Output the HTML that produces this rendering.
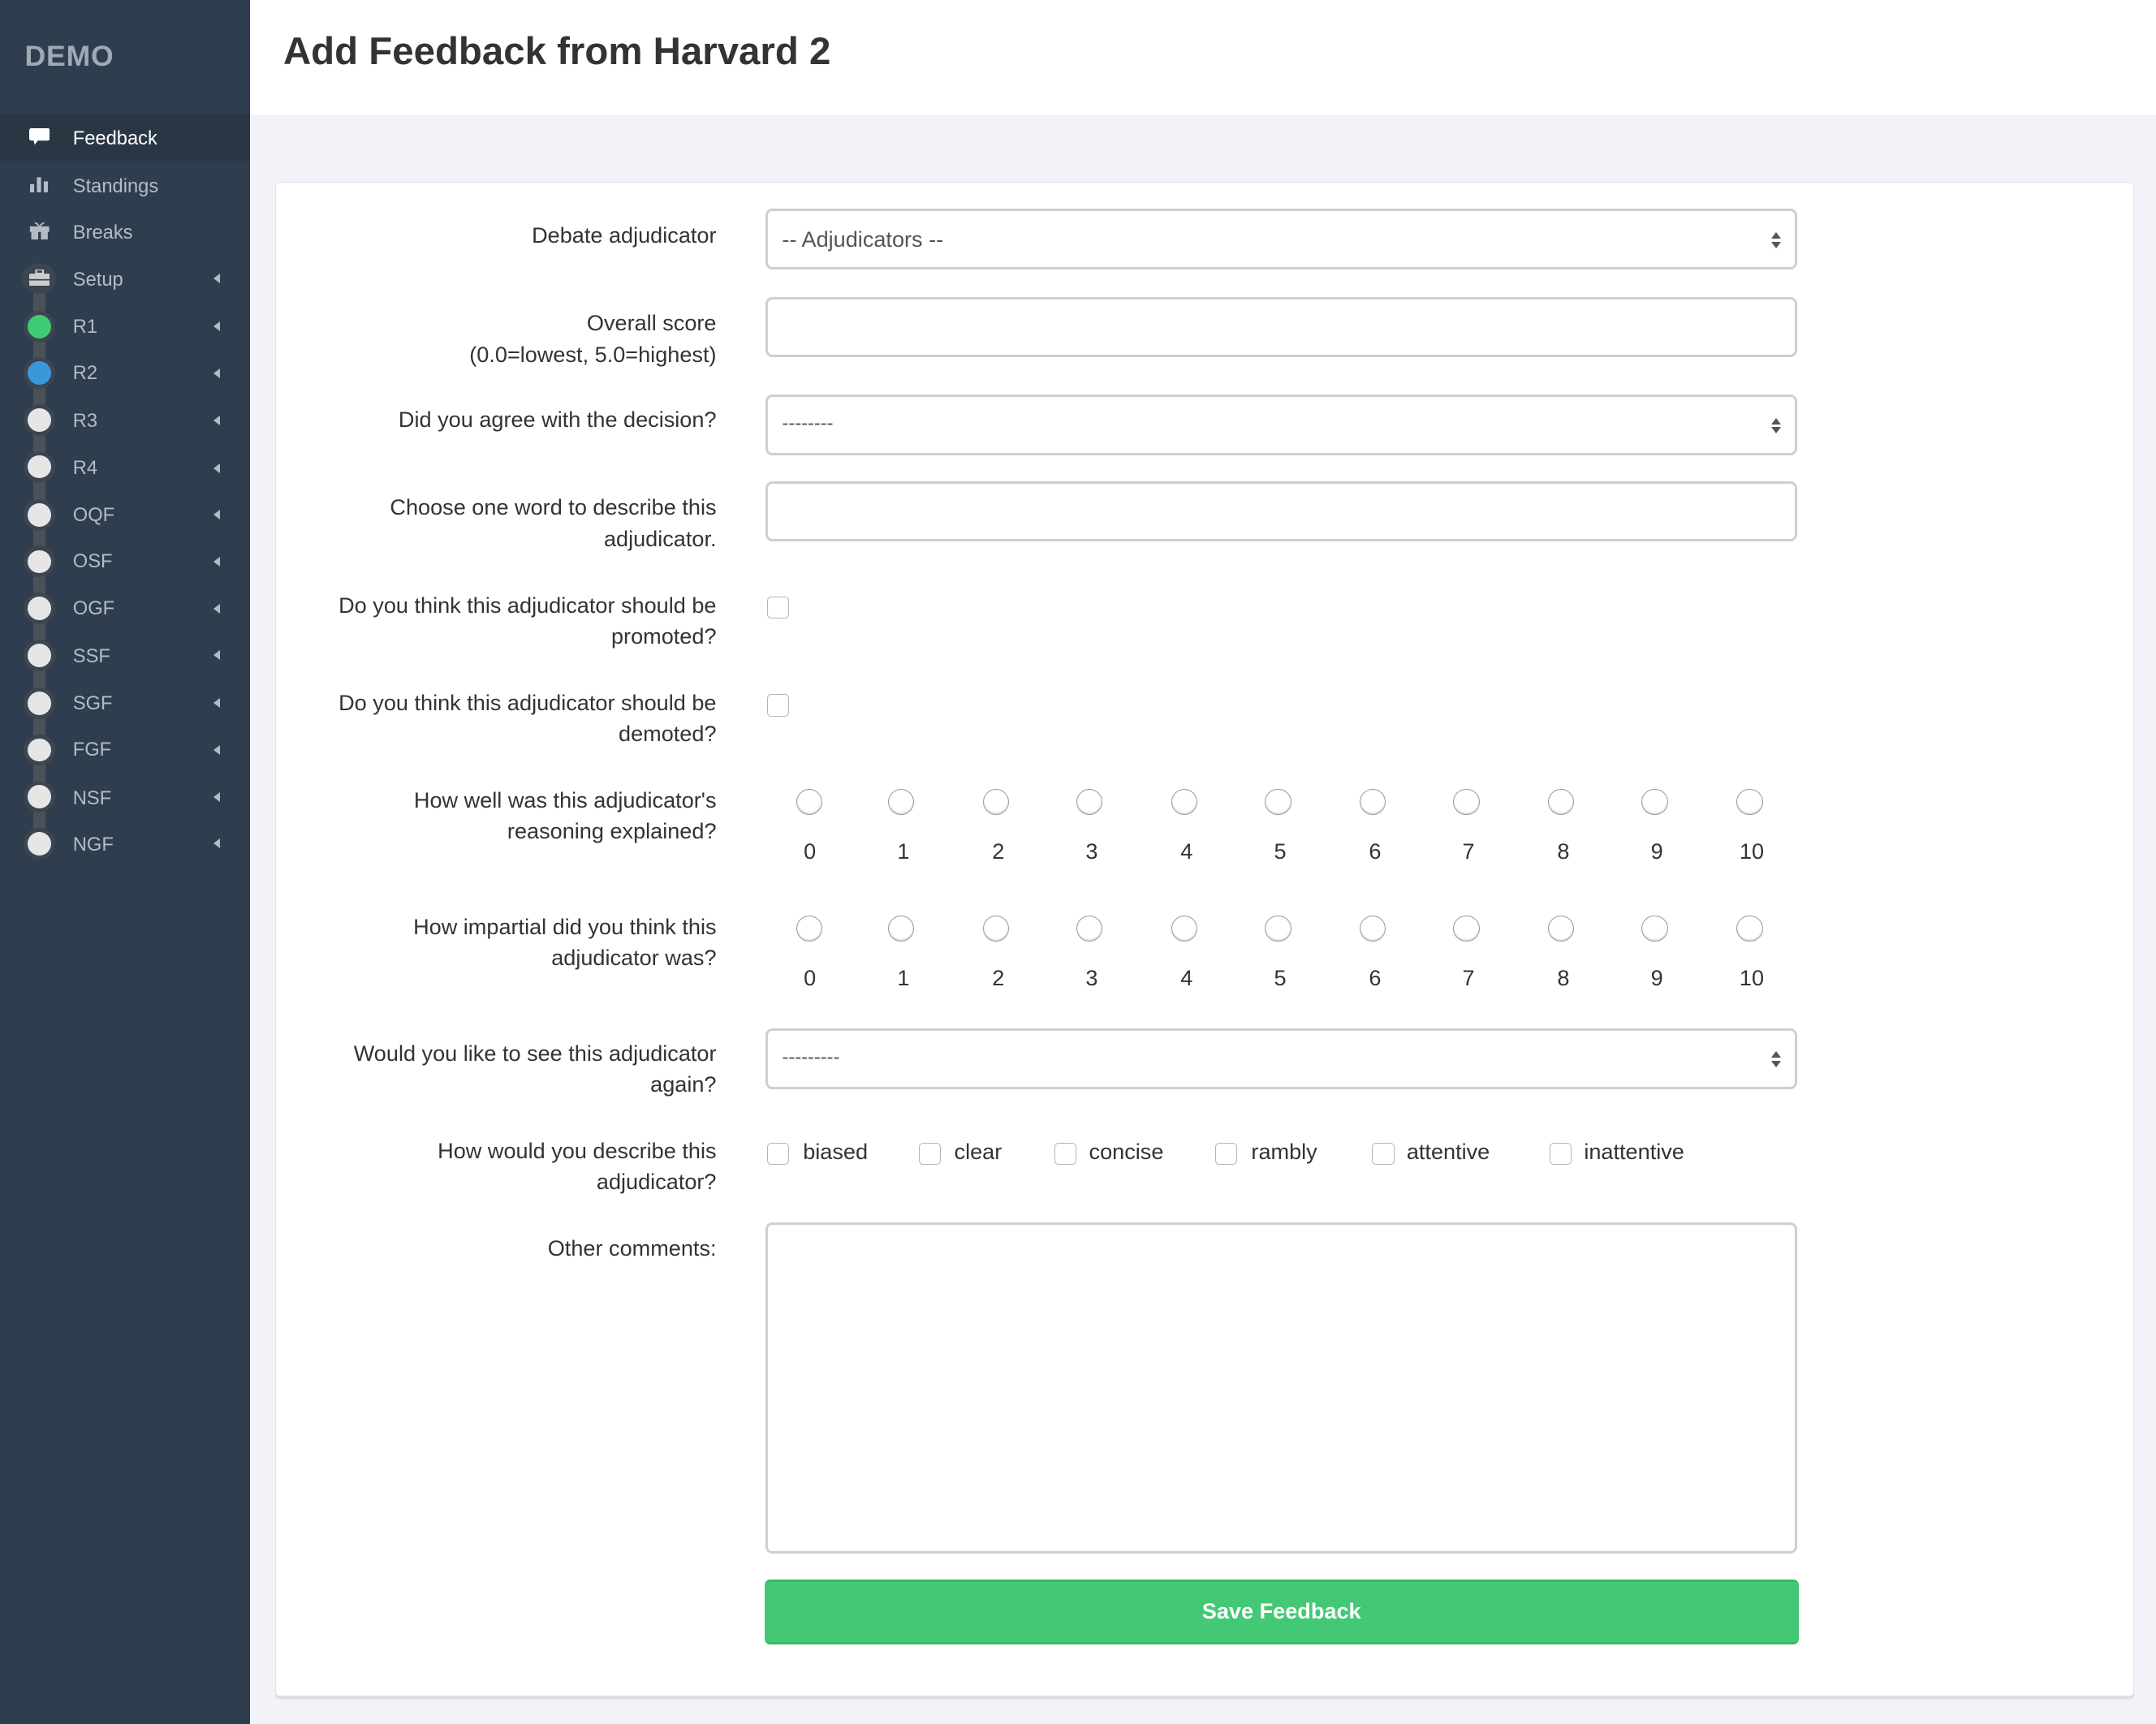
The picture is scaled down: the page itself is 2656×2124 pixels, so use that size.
<!DOCTYPE html>
<html><head><meta charset="utf-8"><style>
html{zoom:1.69388}
*{box-sizing:border-box;margin:0;padding:0}
body{width:1568px;height:1254px;overflow:hidden;background:#f2f3f8;font-family:"Liberation Sans",sans-serif;color:#333;position:relative}
.sb{position:absolute;left:0;top:0;width:182px;height:1254px;background:#2f3e4e}
.demo{position:absolute;left:18px;top:29px;font-size:21px;font-weight:bold;color:#a0aab4;letter-spacing:0.5px}
.act{position:absolute;left:0;top:83px;width:182px;height:34px;background:#293644}
.it{position:absolute;left:53px;font-size:14px;color:#b3bcc5;margin-top:2px}
.ar{position:absolute;left:155px;width:0;height:0;border-top:4px solid transparent;border-bottom:4px solid transparent;border-right:5px solid #b3bcc5;margin-top:1px}
.bar{position:absolute;left:24px;top:205px;width:9px;height:410px;background:#4b5158}
.ring{position:absolute;left:17px;width:23px;height:23px;border-radius:50%;background:#3c4550}
.dot{position:absolute;left:20px;width:17px;height:17px;border-radius:50%;background:#e6e6e6}
.hdr{position:absolute;left:182px;top:0;width:1386px;height:84px;background:#fff}
h1{position:absolute;left:206px;top:21px;font-size:28px;font-weight:bold;color:#333}
.card{position:absolute;left:200px;top:132px;width:1352px;height:1102px;background:#fff;border:1px solid #e2e3e7;border-radius:3px;box-shadow:0 2px 0 #dcdde0}
.lb{position:absolute;right:1047px;text-align:right;font-size:16px;line-height:22.5px;color:#333;white-space:nowrap}
.in{position:absolute;left:557px;width:750px;height:44px;border:2px solid #cfcfcf;border-radius:5px;background:#fff;font-size:16px;color:#555;padding:11px 10px}
.sel::after{content:"";position:absolute;right:10px;top:15px;border-left:4px solid transparent;border-right:4px solid transparent;border-bottom:5px solid #555}
.sel::before{content:"";position:absolute;right:10px;top:22px;border-left:4px solid transparent;border-right:4px solid transparent;border-top:5px solid #555}
.cb{position:absolute;width:16px;height:16px;border:1px solid #b5b5b5;border-radius:3px;background:#fff}
.rd{position:absolute;width:19px;height:19px;border:1px solid #9a9a9a;border-radius:50%;background:#fff;box-shadow:inset 0 -1px 1px #ddd}
.num{position:absolute;font-size:16px;color:#333;width:40px;text-align:center}
.ct{position:absolute;font-size:16px;color:#333}
.btn{position:absolute;left:556px;top:1149px;width:752px;height:47px;background:#43c975;border-radius:4px;border-top:2px solid #37b865;border-bottom:2px solid #37b865;color:#fff;font-weight:bold;font-size:16px;text-align:center;line-height:43px}
</style></head><body>
<div class="sb">
<div class="demo">DEMO</div>
<div class="act"></div>
<svg style="position:absolute;left:21px;top:93px" width="15" height="13" viewBox="0 0 15 13"><rect x="0" y="0" width="15" height="9" rx="1.5" fill="#fff"/><path d="M3 8 L4 12 L7 8Z" fill="#fff"/></svg>
<div class="it" style="top:91px;color:#fff">Feedback</div>
<svg style="position:absolute;left:22px;top:127px" width="14" height="13"><rect x="0" y="7" width="3" height="6" fill="#b3bcc5"/><rect x="5" y="2" width="3" height="11" fill="#b3bcc5"/><rect x="10" y="5" width="3" height="8" fill="#b3bcc5"/></svg>
<div class="it" style="top:126px">Standings</div>
<svg style="position:absolute;left:21px;top:161px" width="15" height="13"><path d="M1 4h13v3H1z M2 8h4v5H2z M9 8h4v5H9z M4 1c2 0 3 2 3.5 3 M11 1c-2 0-3 2-3.5 3" fill="#b3bcc5" stroke="#b3bcc5" stroke-width="1"/></svg>
<div class="it" style="top:160px">Breaks</div>
<div class="bar"></div>
<div class="ring" style="top:191px;width:25px;left:16px"></div>
<svg style="position:absolute;left:21px;top:196px" width="15" height="12"><rect x="5" y="0" width="5" height="3" fill="none" stroke="#ccc" stroke-width="1.3"/><rect x="0" y="3" width="15" height="9" rx="1" fill="#ccc"/><rect x="0" y="7" width="15" height="1" fill="#3c4550"/></svg>
<div class="it" style="top:194px">Setup</div><div class="ar" style="top:198px"></div>
<div class="ring" style="top:226px"></div><div class="dot" style="top:229px;background:#3fcb73"></div>
<div class="it" style="top:228px">R1</div><div class="ar" style="top:233px"></div>
<div class="ring" style="top:260px"></div><div class="dot" style="top:263px;background:#3a97d9"></div>
<div class="it" style="top:262px">R2</div><div class="ar" style="top:267px"></div>
<div class="ring" style="top:294px"></div><div class="dot" style="top:297px"></div>
<div class="it" style="top:297px">R3</div><div class="ar" style="top:301px"></div>
<div class="ring" style="top:328px"></div><div class="dot" style="top:331px"></div>
<div class="it" style="top:331px">R4</div><div class="ar" style="top:336px"></div>
<div class="ring" style="top:363px"></div><div class="dot" style="top:366px"></div>
<div class="it" style="top:365px">OQF</div><div class="ar" style="top:370px"></div>
<div class="ring" style="top:397px"></div><div class="dot" style="top:400px"></div>
<div class="it" style="top:399px">OSF</div><div class="ar" style="top:404px"></div>
<div class="ring" style="top:431px"></div><div class="dot" style="top:434px"></div>
<div class="it" style="top:433px">OGF</div><div class="ar" style="top:438px"></div>
<div class="ring" style="top:465px"></div><div class="dot" style="top:468px"></div>
<div class="it" style="top:468px">SSF</div><div class="ar" style="top:472px"></div>
<div class="ring" style="top:500px"></div><div class="dot" style="top:503px"></div>
<div class="it" style="top:502px">SGF</div><div class="ar" style="top:507px"></div>
<div class="ring" style="top:534px"></div><div class="dot" style="top:537px"></div>
<div class="it" style="top:536px">FGF</div><div class="ar" style="top:541px"></div>
<div class="ring" style="top:568px"></div><div class="dot" style="top:571px"></div>
<div class="it" style="top:571px">NSF</div><div class="ar" style="top:575px"></div>
<div class="ring" style="top:602px"></div><div class="dot" style="top:605px"></div>
<div class="it" style="top:605px">NGF</div><div class="ar" style="top:609px"></div>
</div>
<div class="hdr"></div>
<h1>Add Feedback from Harvard 2</h1>
<div class="card"></div>

<div class="lb" style="top:160px">Debate adjudicator</div>
<div class="in sel" style="top:152px">-- Adjudicators --</div>

<div class="lb" style="top:224px">Overall score<br>(0.0=lowest, 5.0=highest)</div>
<div class="in" style="top:216px"></div>

<div class="lb" style="top:294px">Did you agree with the decision?</div>
<div class="in sel" style="top:287px;font-size:14px;padding-top:12px">--------</div>

<div class="lb" style="top:358px">Choose one word to describe this<br>adjudicator.</div>
<div class="in" style="top:350px"></div>

<div class="lb" style="top:429px">Do you think this adjudicator should be<br>promoted?</div>
<div class="cb" style="left:558px;top:434px"></div>

<div class="lb" style="top:500px">Do you think this adjudicator should be<br>demoted?</div>
<div class="cb" style="left:558px;top:505px"></div>

<div class="lb" style="top:571px">How well was this adjudicator's<br>reasoning explained?</div>
<div class="lb" style="top:663px">How impartial did you think this<br>adjudicator was?</div>

<div class="rd" style="left:579px;top:574px"></div><div class="num" style="left:569px;top:610px">0</div>
<div class="rd" style="left:646px;top:574px"></div><div class="num" style="left:637px;top:610px">1</div>
<div class="rd" style="left:715px;top:574px"></div><div class="num" style="left:706px;top:610px">2</div>
<div class="rd" style="left:783px;top:574px"></div><div class="num" style="left:774px;top:610px">3</div>
<div class="rd" style="left:852px;top:574px"></div><div class="num" style="left:843px;top:610px">4</div>
<div class="rd" style="left:920px;top:574px"></div><div class="num" style="left:911px;top:610px">5</div>
<div class="rd" style="left:989px;top:574px"></div><div class="num" style="left:980px;top:610px">6</div>
<div class="rd" style="left:1057px;top:574px"></div><div class="num" style="left:1048px;top:610px">7</div>
<div class="rd" style="left:1126px;top:574px"></div><div class="num" style="left:1117px;top:610px">8</div>
<div class="rd" style="left:1194px;top:574px"></div><div class="num" style="left:1185px;top:610px">9</div>
<div class="rd" style="left:1263px;top:574px"></div><div class="num" style="left:1254px;top:610px">10</div>

<div class="rd" style="left:579px;top:666px"></div><div class="num" style="left:569px;top:702px">0</div>
<div class="rd" style="left:646px;top:666px"></div><div class="num" style="left:637px;top:702px">1</div>
<div class="rd" style="left:715px;top:666px"></div><div class="num" style="left:706px;top:702px">2</div>
<div class="rd" style="left:783px;top:666px"></div><div class="num" style="left:774px;top:702px">3</div>
<div class="rd" style="left:852px;top:666px"></div><div class="num" style="left:843px;top:702px">4</div>
<div class="rd" style="left:920px;top:666px"></div><div class="num" style="left:911px;top:702px">5</div>
<div class="rd" style="left:989px;top:666px"></div><div class="num" style="left:980px;top:702px">6</div>
<div class="rd" style="left:1057px;top:666px"></div><div class="num" style="left:1048px;top:702px">7</div>
<div class="rd" style="left:1126px;top:666px"></div><div class="num" style="left:1117px;top:702px">8</div>
<div class="rd" style="left:1194px;top:666px"></div><div class="num" style="left:1185px;top:702px">9</div>
<div class="rd" style="left:1263px;top:666px"></div><div class="num" style="left:1254px;top:702px">10</div>

<div class="lb" style="top:755px">Would you like to see this adjudicator<br>again?</div>
<div class="in sel" style="top:748px;font-size:14px;padding-top:12px">---------</div>

<div class="lb" style="top:826px">How would you describe this<br>adjudicator?</div>
<div class="cb" style="left:558px;top:831px"></div><div class="ct" style="left:584px;top:828px">biased</div>
<div class="cb" style="left:668px;top:831px"></div><div class="ct" style="left:694px;top:828px">clear</div>
<div class="cb" style="left:767px;top:831px"></div><div class="ct" style="left:792px;top:828px">concise</div>
<div class="cb" style="left:884px;top:831px"></div><div class="ct" style="left:910px;top:828px">rambly</div>
<div class="cb" style="left:998px;top:831px"></div><div class="ct" style="left:1023px;top:828px">attentive</div>
<div class="cb" style="left:1127px;top:831px"></div><div class="ct" style="left:1152px;top:828px">inattentive</div>

<div class="lb" style="top:897px">Other comments:</div>
<div class="in" style="top:889px;height:241px"></div>

<div class="btn">Save Feedback</div>
</body></html>
